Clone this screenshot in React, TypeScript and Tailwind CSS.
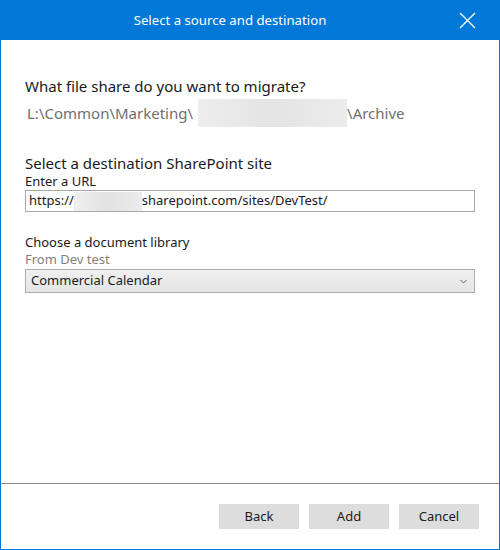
import React from "react";

export default function App() {
  const font = { fontFamily: '"Noto Sans", "Open Sans", sans-serif' };
  return (
    <div className="w-[500px] h-[550px] bg-white border border-t-0 border-[#0078d7] flex flex-col" style={font}>
      <div className="h-[40px] bg-[#0078d7] flex items-center justify-center relative shrink-0 -mx-px">
        <span className="text-white text-[13.2px] pr-[40px] pt-[1px]">Select a source and destination</span>
        <svg className="absolute right-[24px] top-[12px]" width="17" height="17" viewBox="0 0 17 17">
          <path d="M1 1 L16 16 M16 1 L1 16" stroke="white" strokeWidth="1.4" fill="none" />
        </svg>
      </div>
      <div className="flex-1 flex flex-col px-[24px]">
        <div className="mt-[36px] text-[15px] text-[#1a1a1a] leading-[20px]">What file share do you want to migrate?</div>
        <div className="mt-[3px] flex items-center text-[15px] text-[#707070] h-[28px] pl-[2px]">
          <span>L:\Common\Marketing\</span>
          <span className="ml-[5px] w-[149px] h-[28px] bg-gradient-to-r from-[#eeeeee] via-[#e4e4e4] to-[#ececec]" />
          <span>\Archive</span>
        </div>
        <div className="mt-[26px] text-[15px] text-[#1a1a1a] leading-[20px]">Select a destination SharePoint site</div>
        <div className="text-[13px] text-[#1a1a1a] leading-[17px]">Enter a URL</div>
        <div className="h-[22px] w-[450px] border border-[#a8a8a8] flex items-center px-[3px] text-[13px] text-[#1a1a1a]">
          <span>https://</span>
          <span className="w-[68px] h-[19px] bg-gradient-to-r from-[#efefef] via-[#e2e2e2] to-[#ececec]" />
          <span>sharepoint.com/sites/DevTest/</span>
        </div>
        <div className="mt-[21px] text-[13px] text-[#1a1a1a] leading-[18px]">Choose a document library</div>
        <div className="text-[13px] text-[#808080] leading-[17px]">From Dev test</div>
        <div className="mt-[1px] h-[24px] w-[450px] border border-[#adadad] bg-gradient-to-b from-[#f0f0f0] to-[#e5e5e5] flex items-center justify-between pl-[5px] pr-[7px] text-[13px] text-[#1a1a1a]">
          <span>Commercial Calendar</span>
          <svg width="7" height="5" viewBox="0 0 7 5">
            <path d="M0.5 1 L3.5 4 L6.5 1" stroke="#606060" strokeWidth="1" fill="none" />
          </svg>
        </div>
        <div className="flex-1" />
      </div>
      <div className="h-px bg-[#888888] shrink-0" />
      <div className="h-[65px] shrink-0 flex justify-end items-start pt-[20px] pr-[20px] gap-[10px]">
        <button className="w-[80px] h-[25px] bg-[#dddddd] text-[13px] text-[#1a1a1a]">Back</button>
        <button className="w-[80px] h-[25px] bg-[#dddddd] text-[13px] text-[#1a1a1a]">Add</button>
        <button className="w-[80px] h-[25px] bg-[#dddddd] text-[13px] text-[#1a1a1a]">Cancel</button>
      </div>
    </div>
  );
}
